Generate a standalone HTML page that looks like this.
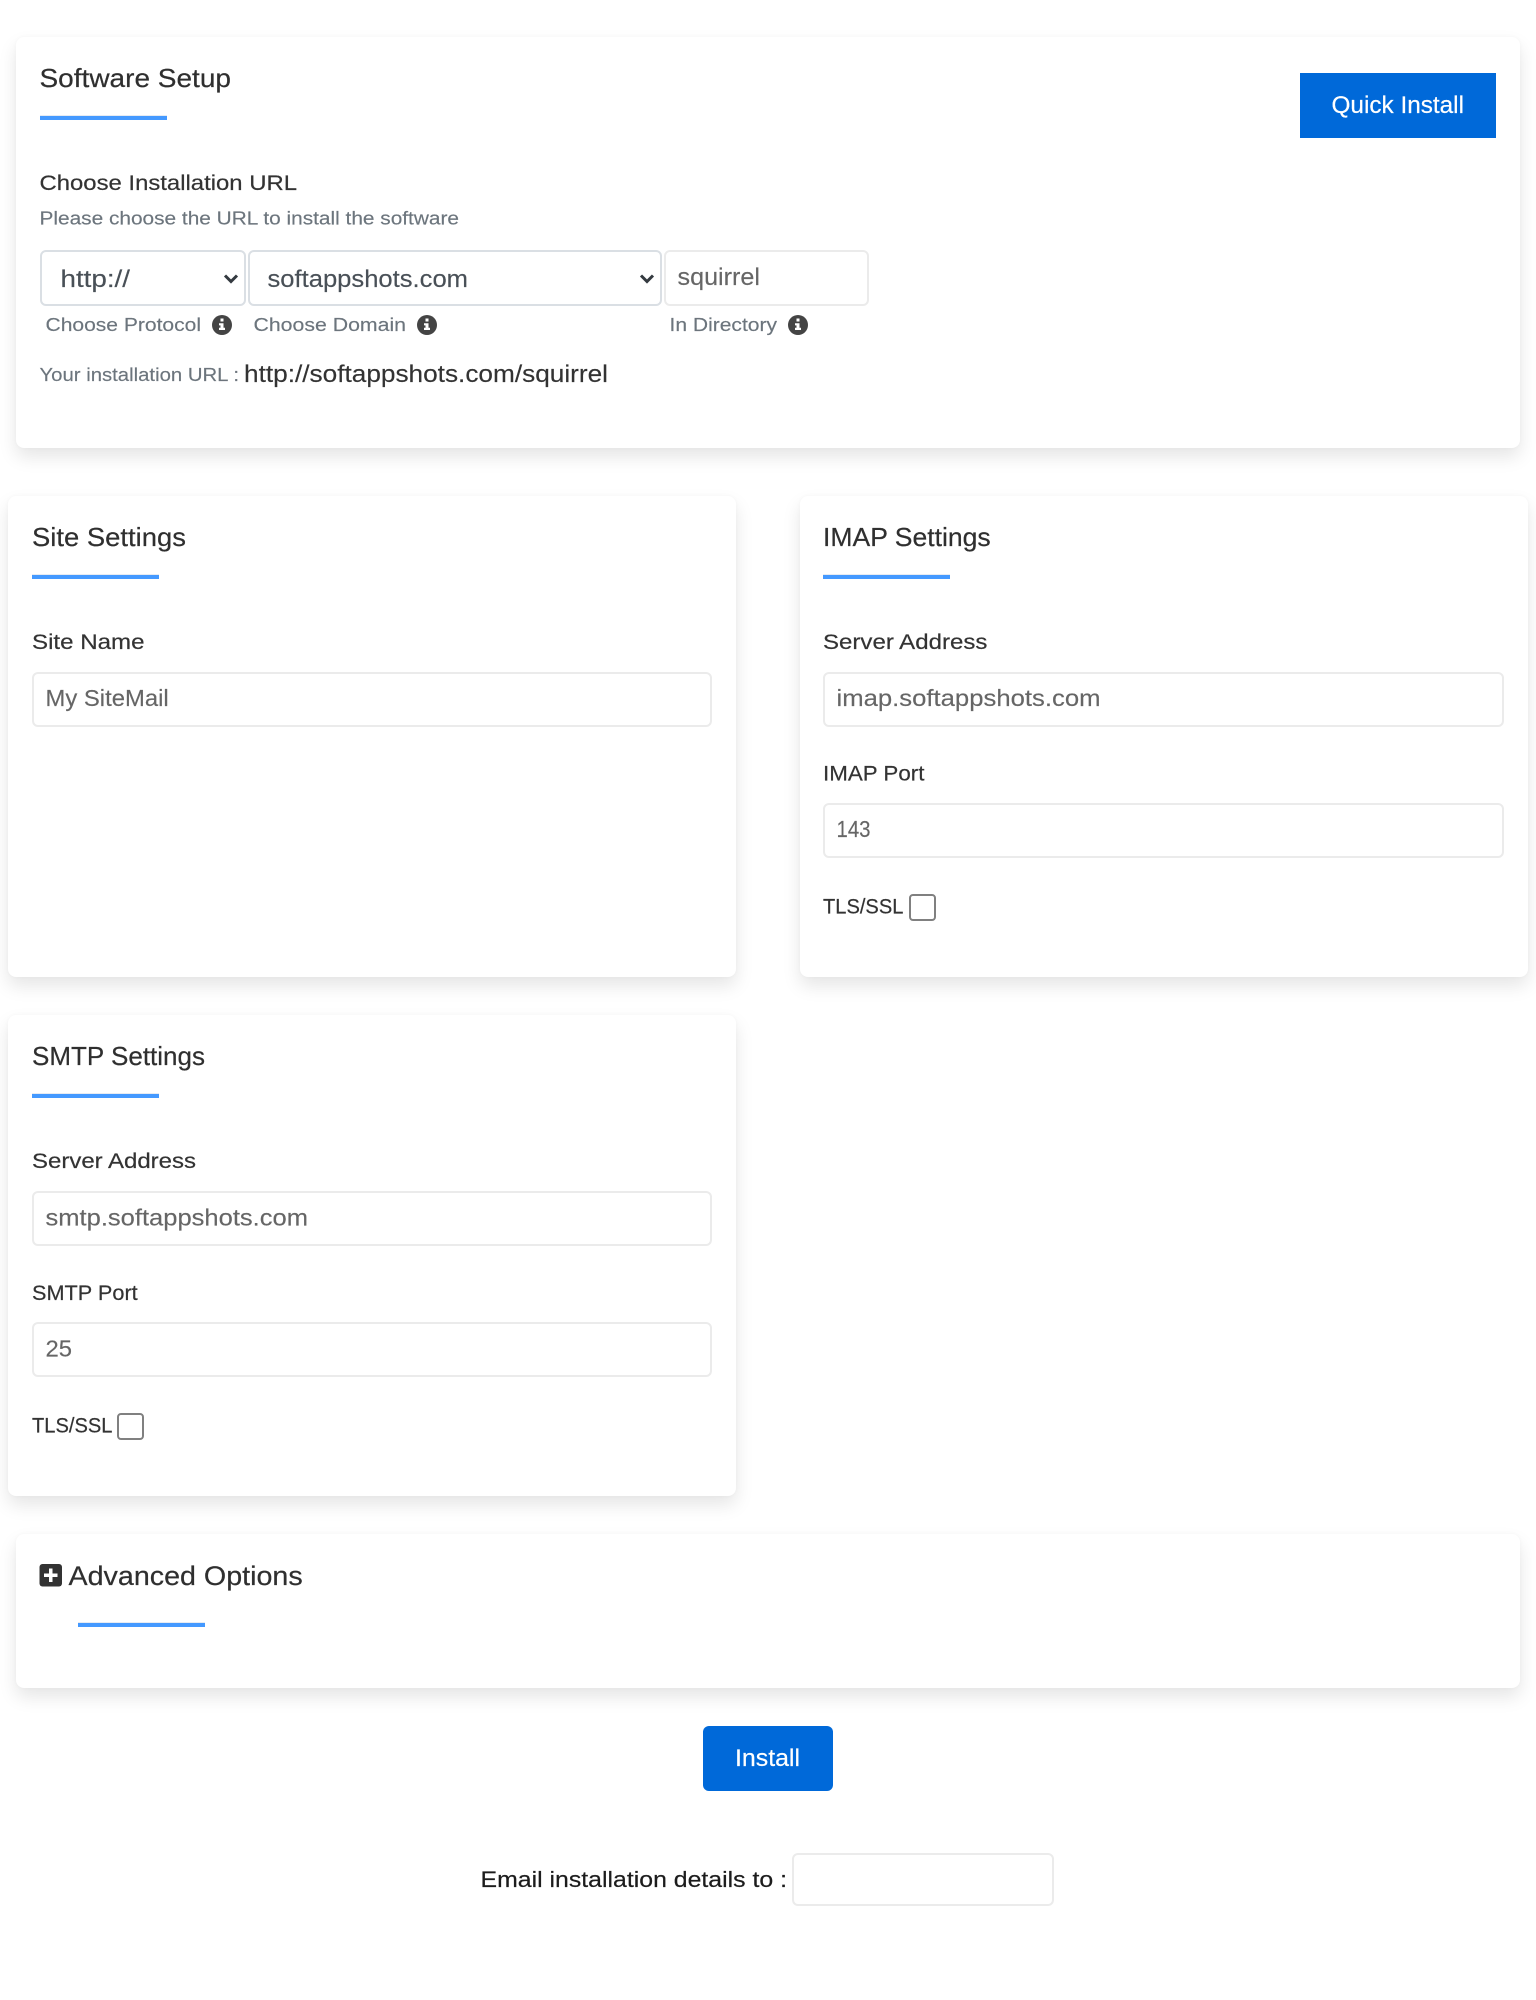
<!DOCTYPE html>
<html lang="en">
<head>
<meta charset="utf-8">
<title>Software Setup</title>
<style>
html,body{margin:0;padding:0;background:#fff;width:1536px;height:2000px;overflow:hidden}
.page{position:relative;width:1536px;height:2000px;font-family:"Liberation Sans",sans-serif}
.card,.box,.line,.btn,.cb{position:absolute;box-sizing:border-box}
.card{background:#fff;border-radius:8px;box-shadow:0 9px 18px rgba(0,0,0,.1),0 0 4px rgba(0,0,0,.03)}
.box{background:#fff;border:2px solid #ebebeb;border-radius:6px}
.sel{border:2px solid #dadfe4}
.line{height:5px;width:127px;background:#4499ff;border-top:1px solid #e6ebf2}
.btn{background:#0069d9}
.cb{width:27px;height:27px;border:2px solid #808080;border-radius:4px;background:#fff}
svg{position:absolute;left:0;top:0}
text{font-family:"Liberation Sans",sans-serif}
.h{font-size:26px;fill:#2f2f2f;stroke:#2f2f2f;stroke-width:.2}
.l{font-size:21px;fill:#333;stroke:#333;stroke-width:.2}
.s{font-size:18.500px;fill:#6c757d;stroke:#6c757d;stroke-width:.15}
.v{font-size:23px;fill:#666;stroke:#666;stroke-width:.15}
.sv{font-size:24px;fill:#495057;stroke:#495057;stroke-width:.15}
.w{fill:#fff;stroke:#fff;stroke-width:.2}
</style>
</head>
<body>
<div class="page">
  <div class="card" style="left:16px;top:37px;width:1504px;height:411px"></div>
  <div class="card" style="left:8px;top:496px;width:728px;height:481px"></div>
  <div class="card" style="left:800px;top:496px;width:728px;height:481px"></div>
  <div class="card" style="left:8px;top:1015px;width:728px;height:481px"></div>
  <div class="card" style="left:16px;top:1534px;width:1504px;height:154px"></div>

  <div class="line" style="left:39.500px;top:114.500px"></div>
  <div class="line" style="left:32px;top:573.500px"></div>
  <div class="line" style="left:823px;top:573.500px"></div>
  <div class="line" style="left:32px;top:1092.500px"></div>
  <div class="line" style="left:78px;top:1621.500px"></div>

  <div class="btn" style="left:1300px;top:73px;width:196px;height:65px"></div>
  <div class="btn" style="left:703px;top:1726px;width:130px;height:65px;border-radius:6px"></div>

  <div class="box sel" style="left:40px;top:250px;width:206px;height:56px"></div>
  <div class="box sel" style="left:248px;top:250px;width:414px;height:56px"></div>
  <div class="box" style="left:664px;top:250px;width:205px;height:56px"></div>

  <div class="box" style="left:32px;top:672px;width:680px;height:55px"></div>
  <div class="box" style="left:823px;top:672px;width:681px;height:55px"></div>
  <div class="box" style="left:823px;top:803px;width:681px;height:55px"></div>
  <div class="box" style="left:32px;top:1191px;width:680px;height:55px"></div>
  <div class="box" style="left:32px;top:1322px;width:680px;height:55px"></div>
  <div class="box" style="left:792px;top:1853px;width:262px;height:53px"></div>

  <div class="cb" style="left:909px;top:894px"></div>
  <div class="cb" style="left:117px;top:1413px"></div>

  <svg width="1536" height="2000" viewBox="0 0 1536 2000" xmlns="http://www.w3.org/2000/svg">
    <text class="h" x="39.500" y="87" textLength="191.500" lengthAdjust="spacingAndGlyphs">Software Setup</text>
    <text class="l" x="39.500" y="190" textLength="257.500" lengthAdjust="spacingAndGlyphs">Choose Installation URL</text>
    <text class="s" x="39.500" y="224.500" textLength="419.500" lengthAdjust="spacingAndGlyphs">Please choose the URL to install the software</text>
    <text class="sv" x="60.500" y="287" textLength="69.500" lengthAdjust="spacingAndGlyphs">http://</text>
    <text class="sv" x="267.500" y="287" textLength="200.500" lengthAdjust="spacingAndGlyphs">softappshots.com</text>
    <text class="v" x="677.500" y="285" textLength="82.500" lengthAdjust="spacingAndGlyphs" style="font-size:24px">squirrel</text>
    <path d="M225 275.500L231 281.500L237 275.500" fill="none" stroke="#343a40" stroke-width="3"/>
    <path d="M641 275.500L647 281.500L653 275.500" fill="none" stroke="#343a40" stroke-width="3"/>

    <text class="s" x="45.500" y="331" textLength="155.500" lengthAdjust="spacingAndGlyphs">Choose Protocol</text>
    <text class="s" x="253.500" y="331" textLength="152.500" lengthAdjust="spacingAndGlyphs">Choose Domain</text>
    <text class="s" x="669.500" y="331" textLength="107.500" lengthAdjust="spacingAndGlyphs">In Directory</text>

    <g transform="translate(222 325)"><circle r="10" fill="#444"/><path d="M-1.500-6.500h3v3h-3zM-3-1.800h4.500v4.600h1.500v2.200h-6v-2.200h1.500v-2.400h-1.500z" fill="#fff"/></g>
    <g transform="translate(427 325)"><circle r="10" fill="#444"/><path d="M-1.500-6.500h3v3h-3zM-3-1.800h4.500v4.600h1.500v2.200h-6v-2.200h1.500v-2.400h-1.500z" fill="#fff"/></g>
    <g transform="translate(798 325)"><circle r="10" fill="#444"/><path d="M-1.500-6.500h3v3h-3zM-3-1.800h4.500v4.600h1.500v2.200h-6v-2.200h1.500v-2.400h-1.500z" fill="#fff"/></g>

    <text class="s" x="39.500" y="381" textLength="199.500" lengthAdjust="spacingAndGlyphs">Your installation URL :</text>
    <text x="244" y="382" textLength="364" lengthAdjust="spacingAndGlyphs" style="font-size:24px;fill:#333;stroke:#333;stroke-width:.15">http://softappshots.com/squirrel</text>
    <text class="w" x="1331.500" y="113" textLength="132.500" lengthAdjust="spacingAndGlyphs" style="font-size:24px">Quick Install</text>

    <text class="h" x="32" y="546" textLength="154" lengthAdjust="spacingAndGlyphs">Site Settings</text>
    <text class="l" x="32" y="649" textLength="112.500" lengthAdjust="spacingAndGlyphs">Site Name</text>
    <text class="v" x="45.500" y="706" textLength="123.200" lengthAdjust="spacingAndGlyphs">My SiteMail</text>

    <text class="h" x="823" y="546" textLength="167.700" lengthAdjust="spacingAndGlyphs">IMAP Settings</text>
    <text class="l" x="823" y="649" textLength="164.400" lengthAdjust="spacingAndGlyphs">Server Address</text>
    <text class="v" x="836.500" y="706" textLength="264" lengthAdjust="spacingAndGlyphs">imap.softappshots.com</text>
    <text class="l" x="823" y="780.500" textLength="101.400" lengthAdjust="spacingAndGlyphs">IMAP Port</text>
    <text class="v" x="836.500" y="837" textLength="34" lengthAdjust="spacingAndGlyphs">143</text>
    <text class="l" x="823" y="913.500" textLength="80.400" lengthAdjust="spacingAndGlyphs">TLS/SSL</text>

    <text class="h" x="32" y="1065" textLength="173" lengthAdjust="spacingAndGlyphs">SMTP Settings</text>
    <text class="l" x="32" y="1168" textLength="164" lengthAdjust="spacingAndGlyphs">Server Address</text>
    <text class="v" x="45.500" y="1225.500" textLength="262.500" lengthAdjust="spacingAndGlyphs">smtp.softappshots.com</text>
    <text class="l" x="32" y="1300" textLength="105.700" lengthAdjust="spacingAndGlyphs">SMTP Port</text>
    <text class="v" x="45.500" y="1356.500" textLength="26.500" lengthAdjust="spacingAndGlyphs">25</text>
    <text class="l" x="32" y="1432.500" textLength="80.500" lengthAdjust="spacingAndGlyphs">TLS/SSL</text>

    <rect x="39.500" y="1564" width="22.500" height="22.500" rx="3" fill="#333"/>
    <path d="M49 1568.500h3.500v5h5v3.500h-5v5h-3.500v-5h-5v-3.500h5z" fill="#fff"/>
    <text class="h" x="68.500" y="1585" textLength="234.200" lengthAdjust="spacingAndGlyphs" style="font-size:27px">Advanced Options</text>

    <text class="w" x="735" y="1766" textLength="65" lengthAdjust="spacingAndGlyphs" style="font-size:24px">Install</text>
    <text x="480.500" y="1887" textLength="306.500" lengthAdjust="spacingAndGlyphs" style="font-size:22px;fill:#1c1c1c;stroke:#1c1c1c;stroke-width:.2">Email installation details to :</text>
  </svg>
</div>
</body>
</html>
